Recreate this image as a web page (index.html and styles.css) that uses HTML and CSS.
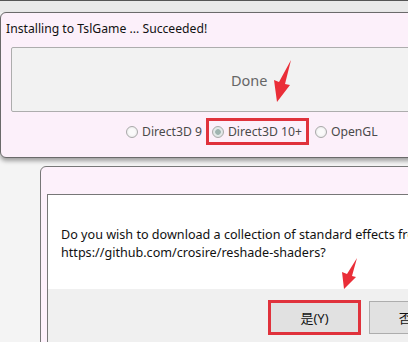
FILE: index.html
```html
<!DOCTYPE html>
<html lang="en">

<head>
  <meta charset="UTF-8">
  <meta name="viewport" content="width=device-width, initial-scale=1.0">
  <title>ReShade Setup</title>
  <link rel="stylesheet" href="styles.css">
</head>

<body>
  <div class="top-strip"></div>

  <!-- installer window -->
  <section class="setup-window">
    <p class="status">Installing to TslGame ... Succeeded!</p>
    <button class="done-btn">Done</button>
    <div class="api-row">
      <label class="api"><span class="radio"></span>Direct3D 9</label>
      <label class="api marked"><span class="radio checked"></span>Direct3D 10+</label>
      <label class="api"><span class="radio"></span>OpenGL</label>
    </div>
    <svg class="arrow arrow-done" width="30" height="46" viewBox="0 0 30 46">
      <polygon points="24,2 18,26 23,27 10,44 7,22 12,24" fill="#ea2e38" />
    </svg>
  </section>

  <!-- message box -->
  <section class="msg-window">
    <div class="msg-panel">
      <div class="msg-body">
        <p>Do you wish to download a collection of standard effects from</p>
        <p>https://github.com/crosire/reshade-shaders?</p>
      </div>
      <div class="msg-footer">
        <button class="msg-btn marked">是(Y)</button>
        <button class="msg-btn">否(N)</button>
      </div>
    </div>
    <svg class="arrow arrow-yes" width="22" height="34" viewBox="0 0 22 34">
      <polygon points="19,1 14,19 18,20 6,32 4,15 9,17" fill="#ea2e38" />
    </svg>
  </section>
</body>

</html>
```

FILE: styles.css
```css
html,
body {
  margin: 0;
  height: 100%;
  overflow: hidden;
}

body {
  background-color: #f4f4f4;
  font-family: "Noto Sans", "Noto Sans CJK SC", sans-serif;
  position: relative;
}

.top-strip {
  height: 11px;
  border-top: 1px solid #555;
  background-color: #e9e9e9;
}

.setup-window {
  width: 440px;
  height: 144px;
  border: 1px solid #6a6a6a;
  border-radius: 6px;
  background-color: #fcf0fa;
  box-shadow: 0 3px 4px rgba(0, 0, 0, 0.35);
  position: relative;
}

.status {
  margin: 0;
  padding: 6px 0 0 5px;
  font-size: 12.2px;
  line-height: 20px;
  color: #111;
}

.done-btn {
  display: block;
  margin: 8px 0 0 10px;
  width: 420px;
  height: 65px;
  border: 1px solid #adadad;
  border-radius: 2px;
  background-color: #f2f2f2;
  color: #666;
  font-family: inherit;
  font-size: 14.5px;
  padding: 0;
  text-align: left;
  text-indent: 219px;
}

.api-row {
  display: flex;
  align-items: center;
  margin: 5px 0 0 122px;
  height: 29px;
}

.api {
  display: flex;
  align-items: center;
  height: 27px;
  padding: 0 3px;
  font-size: 12.2px;
  color: #4a4a4a;
}

.api.marked {
  border: 3px solid #e0323c;
  height: 21px;
  padding: 0 4px 0 3px;
  margin: 0 3px 0 1px;
}

.radio {
  width: 10px;
  height: 10px;
  border: 1px solid #a9a9a9;
  border-radius: 50%;
  background: radial-gradient(circle, #fafafa 40%, #e2e2e2 100%);
  margin-right: 4px;
  box-sizing: content-box;
}

.radio.checked {
  background: radial-gradient(circle, #9fb4b0 0, #9fb4b0 35%, #e4eaea 45%, #d8dcdc 100%);
}

.arrow {
  position: absolute;
}

.arrow-done {
  left: 266px;
  top: 45px;
}

.msg-window {
  position: relative;
  margin: 8px 0 0 40px;
  width: 420px;
  height: 200px;
  border: 1px solid #777;
  border-radius: 6px;
  background-color: #fdf1fb;
}

.msg-panel {
  margin: 27px 0 0 6px;
  border-top: 1px solid #777;
  border-left: 1px solid #777;
  background-color: #fff;
}

.msg-body {
  height: 94px;
  padding: 0 0 0 13px;
  font-size: 12.6px;
  color: #111;
  line-height: 18px;
  white-space: nowrap;
}

.msg-body p {
  margin: 0;
}

.msg-body p:first-child {
  padding-top: 31px;
}

.msg-footer {
  display: flex;
  gap: 8px;
  height: 60px;
  padding: 12px 0 0 223px;
  background-color: #f0f0f0;
  box-sizing: border-box;
}

.msg-btn {
  width: 90px;
  height: 33px;
  border: 1px solid #adadad;
  background-color: #e1e1e1;
  font-family: inherit;
  font-size: 13px;
  color: #111;
  padding: 0;
}

.msg-btn.marked {
  width: 93px;
  height: 35px;
  border: 3px solid #e0323c;
  margin-left: -3px;
  margin-top: -1px;
}

.arrow-yes {
  left: 297px;
  top: 90px;
}
```
